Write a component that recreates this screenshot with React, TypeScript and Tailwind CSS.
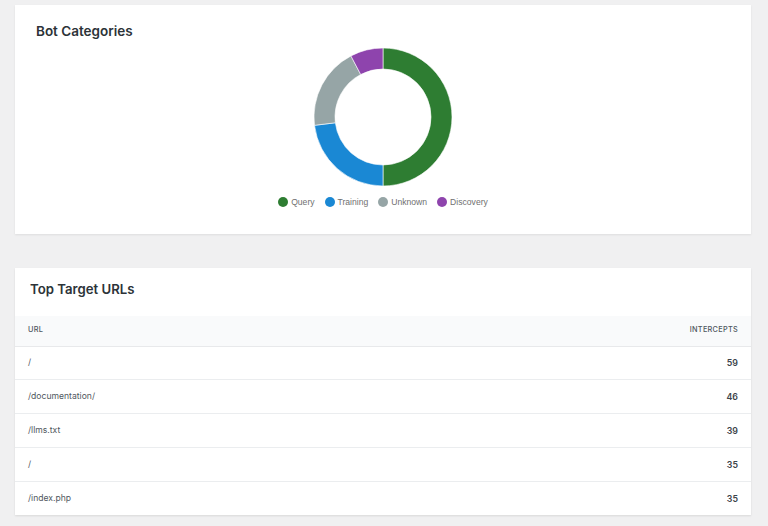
import React from "react";

// Bot category counts
const categories = [
  { label: "Query", value: 13, color: "#2e7d32" },
  { label: "Training", value: 6, color: "#1a88d4" },
  { label: "Unknown", value: 5, color: "#96a5a6" },
  { label: "Discovery", value: 2, color: "#8e44ad" },
];

const urls = [
  { url: "/", count: 59 },
  { url: "/documentation/", count: 46 },
  { url: "/llms.txt", count: 39 },
  { url: "/", count: 35 },
  { url: "/index.php", count: 35 },
];

const Donut: React.FC = () => {
  const cx = 70;
  const cy = 70;
  const outer = 69;
  const inner = 48;
  const total = categories.reduce((s, c) => s + c.value, 0);
  let start = 0;

  const point = (r: number, a: number) => [
    cx + r * Math.sin(a),
    cy - r * Math.cos(a),
  ];

  return (
    <svg width="140" height="140" viewBox="0 0 140 140">
      {categories.map((c) => {
        const a0 = (start / total) * Math.PI * 2;
        start += c.value;
        const a1 = (start / total) * Math.PI * 2;
        const large = a1 - a0 > Math.PI ? 1 : 0;
        const [x0, y0] = point(outer, a0);
        const [x1, y1] = point(outer, a1);
        const [x2, y2] = point(inner, a1);
        const [x3, y3] = point(inner, a0);
        const d = `M${x0} ${y0} A${outer} ${outer} 0 ${large} 1 ${x1} ${y1} L${x2} ${y2} A${inner} ${inner} 0 ${large} 0 ${x3} ${y3} Z`;
        return (
          <path key={c.label} d={d} fill={c.color} stroke="#fff" strokeWidth="0.6" />
        );
      })}
    </svg>
  );
};

export default function App() {
  return (
    <div className="min-h-[526px] bg-[#f0f0f1] pl-[15px] pr-[17px] pt-[5px] pb-[11px] font-['Inter',sans-serif]">
      {/* Bot categories card */}
      <div className="bg-white shadow-[0_1px_2px_rgba(0,0,0,0.08)] pt-[17px] pb-[26px] px-[21px]">
        <h2 className="text-[13.5px] leading-[18px] font-semibold text-[#2c3338]">
          Bot Categories
        </h2>
        <div className="flex justify-center mt-[7px]">
          <Donut />
        </div>
        <div className="flex justify-center items-center gap-[10px] mt-[9px] font-['Liberation_Sans',Arial,sans-serif] text-[8.6px] leading-[12px] text-[#707070]">
          {categories.map((c) => (
            <div key={c.label} className="flex items-center gap-[3px]">
              <span
                className="w-[10px] h-[10px] rounded-full inline-block"
                style={{ backgroundColor: c.color }}
              />
              <span>{c.label}</span>
            </div>
          ))}
        </div>
      </div>

      {/* Top target URLs card */}
      <div className="bg-white shadow-[0_1px_2px_rgba(0,0,0,0.1)] mt-[34px]">
        <h2 className="px-[15px] pt-[11px] pb-[17px] text-[13.2px] leading-[20px] font-semibold text-[#2c3338]">
          Top Target URLs
        </h2>
        <table className="w-full border-collapse">
          <thead>
            <tr className="bg-[#f9fafb] border-b border-[#e8e9eb]">
              <th className="h-[30px] px-[13px] text-left text-[7.3px] font-medium tracking-[0.04em] text-[#50575e] uppercase">
                URL
              </th>
              <th className="h-[30px] px-[13px] text-right text-[7.3px] font-medium tracking-[0.04em] text-[#50575e] uppercase">
                Intercepts
              </th>
            </tr>
          </thead>
          <tbody>
            {urls.map((u, i) => (
              <tr
                key={i}
                className={i < urls.length - 1 ? "border-b border-[#ebedef]" : ""}
              >
                <td className="h-[33.8px] px-[13px] text-[8.6px] text-[#50575e]">
                  {u.url}
                </td>
                <td className="h-[33.8px] px-[13px] text-right text-[8.8px] font-semibold text-[#3c434a]">
                  {u.count}
                </td>
              </tr>
            ))}
          </tbody>
        </table>
      </div>
    </div>
  );
}
